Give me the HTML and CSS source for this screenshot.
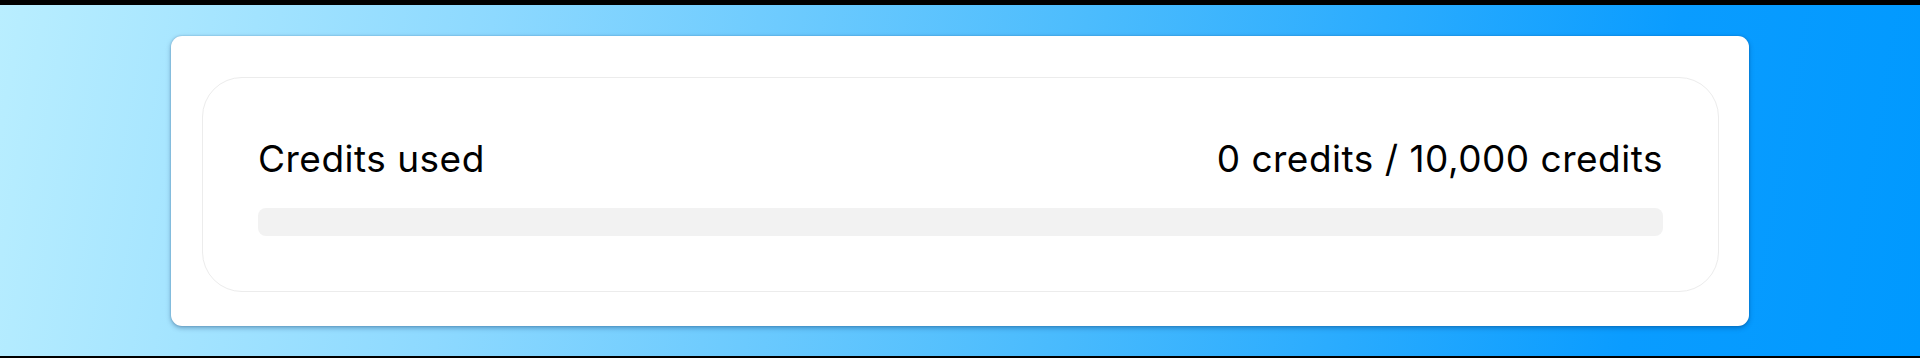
FILE: index.html
```html
<!DOCTYPE html>
<html lang="en">
<head>
<meta charset="utf-8">
<title>Credits</title>
<link rel="stylesheet" href="styles.css">
</head>
<body>
<main class="stage">
  <section class="card">
    <div class="usage">
      <div class="usage-row">
        <span class="usage-label">Credits used</span>
        <span class="usage-value">0 credits / 10,000 credits</span>
      </div>
      <div class="track"><div class="fill" style="width:0%"></div></div>
    </div>
  </section>
</main>
</body>
</html>
```
FILE: styles.css
```css
html, body {
  margin: 0;
  padding: 0;
  background: #000;
  height: 358px;
  overflow: hidden;
}
body {
  font-family: Inter, "Noto Sans", sans-serif;
  color: #000;
}
.stage {
  margin-top: 5px;
  height: 351px;
  box-sizing: border-box;
  padding-top: 31px;
  background: linear-gradient(100deg, #b9eeff 0%, #8dd9ff 25%, #4cbcfd 55%, #0a9cff 85%, #0099ff 100%);
  display: flex;
  justify-content: center;
  align-items: flex-start;
}
.card {
  width: 1578px;
  height: 290px;
  box-sizing: border-box;
  background: #fff;
  border-radius: 11px;
  padding: 41px 30px 34px 31px;
  box-shadow: 0 2px 5px rgba(0, 40, 90, 0.35), 0 0 2px rgba(0, 40, 90, 0.25);
}
.usage {
  height: 215px;
  box-sizing: border-box;
  border: 1px solid #ececec;
  border-radius: 40px;
  padding: 54px 55px 54px 55px;
  display: flex;
  flex-direction: column;
  gap: 22px;
}
.usage-row {
  display: flex;
  justify-content: space-between;
  align-items: center;
  font-size: 37px;
  line-height: 54px;
  letter-spacing: 0.5px;
}
.track {
  height: 28px;
  border-radius: 8px;
  background: #f2f2f2;
  overflow: hidden;
}
.fill {
  height: 100%;
  background: #0099ff;
}
```
